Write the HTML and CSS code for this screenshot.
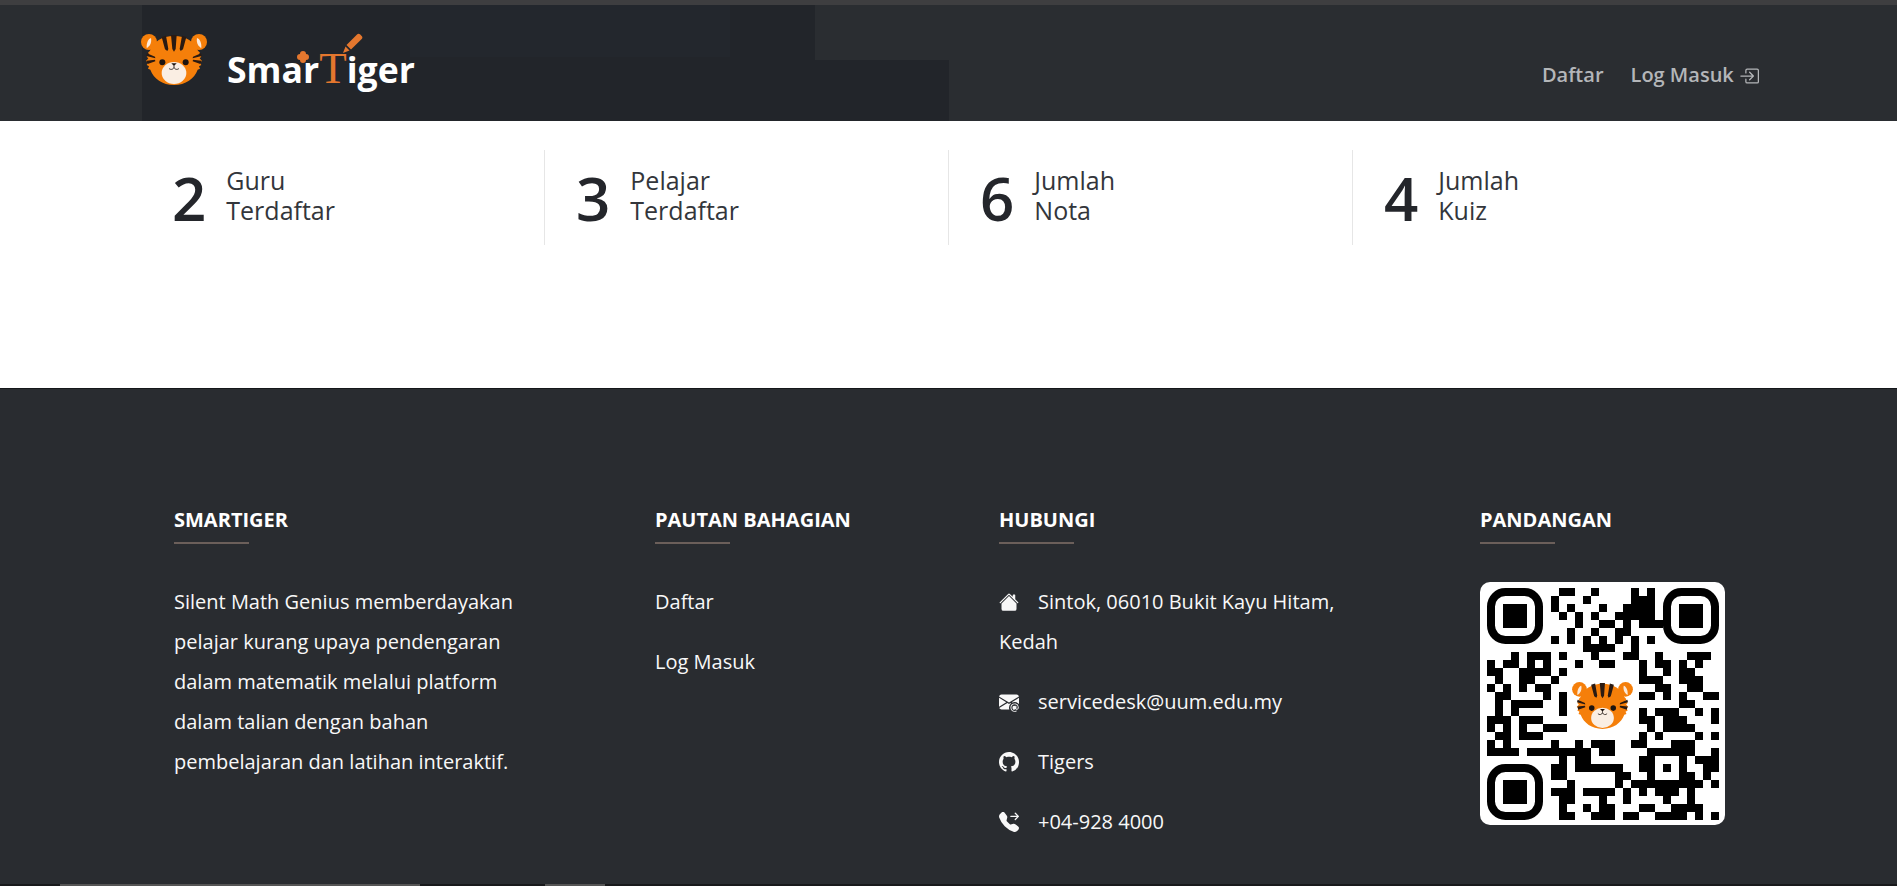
FILE: index.html
```html
<!DOCTYPE html>
<html lang="ms">
<head>
    <meta charset="UTF-8">
    <meta name="viewport" content="width=device-width, initial-scale=1.0">
    <title>SmarTiger</title>
    <link rel="stylesheet" href="styles.css">
</head>
<body>
    <svg class="defs" width="0" height="0">
        <symbol id="tiger" viewBox="0 0 198 153">
            <circle cx="24" cy="24" r="24" fill="#f57f0a"/>
            <circle cx="174" cy="24" r="24" fill="#f57f0a"/>
            <path d="M30 12c-8 2-14 14-13 30 8-4 16-14 13-30z" fill="#fbeadb"/>
            <path d="M168 12c8 2 14 14 13 30-8-4-16-14-13-30z" fill="#fbeadb"/>
            <path d="M99 6c36 0 62 18 72 44l6 6-3 5 7 7-5 5 7 8-7 4 5 8-7 4 3 7-7 3c-10 27-36 46-71 46s-61-19-71-46l-7-3 3-7-7-4 5-8-7-4 7-8-5-5 7-7-3-5 6-6C37 24 63 6 99 6z" fill="#f57f0a"/>
            <path d="M90 3h17l-3 42-5 8-5-8zM62 9l13-4 7 40-3 6-7-5zM136 9l-13-4-7 40 3 6 7-5zM18 58l24 10 1 5-27-7zM17 80l25-3 1 5-23 8zM180 58l-24 10-1 5 27-7zM181 80l-25-3-1 5 23 8z" fill="#2a1a12"/>
            <ellipse cx="99" cy="117" rx="37" ry="33" fill="#faeee3"/>
            <circle cx="64" cy="85" r="9" fill="#1d1410"/>
            <circle cx="134" cy="85" r="9" fill="#1d1410"/>
            <path d="M91 88h16l-8 8z" fill="#1d1410"/>
            <path d="M99 95v5c-2 7-11 8-15 3M99 100c2 7 11 8 15 3" fill="none" stroke="#1d1410" stroke-width="2.5"/>
        </symbol>
    </svg>

    <div class="topline"></div>

    <header class="header">
        <div class="header-bg">
            <div class="bg-upper"><div class="bg-patch"></div></div>
            <div class="bg-lower"></div>
        </div>
        <a class="logo" href="#">
            <svg class="logo-tiger"><use href="#tiger"/></svg>
            <span class="logo-text">Smar<span class="logo-t">T</span>iger</span>
            <svg class="logo-pencil" viewBox="0 0 20 20">
                <path d="M14 1.5a2.2 2.2 0 0 1 3-.2l1.700 1.700a2.200 2.200 0 0 1 0 3L8 16.500 3.500 12z" fill="#e4772e"/>
                <path d="M2.500 13.500l4 4L0 20z" fill="#e4772e"/>
            </svg>
            <svg class="logo-spark" viewBox="0 0 12 12">
                <path d="M6 0a3 3 0 0 1 3 3 3 3 0 0 1 0 6 3 3 0 0 1-6 0 3 3 0 0 1 0-6 3 3 0 0 1 3-3z" fill="#e4772e"/>
            </svg>
        </a>
        <nav class="nav">
            <a href="#">Daftar</a>
            <a href="#">Log Masuk
                <svg class="nav-icon" viewBox="0 0 16 16" fill="currentColor">
                    <path d="M6 3.5a.5.5 0 0 1 .5-.5h8a.5.5 0 0 1 .5.5v9a.5.5 0 0 1-.5.5h-8a.5.5 0 0 1-.5-.5v-2a.5.5 0 0 0-1 0v2A1.5 1.5 0 0 0 6.5 14h8a1.5 1.5 0 0 0 1.5-1.5v-9A1.5 1.5 0 0 0 14.5 2h-8A1.5 1.5 0 0 0 5 3.5v2a.5.5 0 0 0 1 0z"/>
                    <path d="M11.854 8.354a.5.5 0 0 0 0-.708l-3-3a.5.5 0 1 0-.708.708L10.293 7.5H1.5a.5.5 0 0 0 0 1h8.793l-2.147 2.146a.5.5 0 0 0 .708.708z"/>
                </svg>
            </a>
        </nav>
    </header>

    <section class="stats">
        <div class="stat"><span class="stat-num">2</span><span class="stat-label">Guru<br>Terdaftar</span></div>
        <div class="stat"><span class="stat-num">3</span><span class="stat-label">Pelajar<br>Terdaftar</span></div>
        <div class="stat"><span class="stat-num">6</span><span class="stat-label">Jumlah<br>Nota</span></div>
        <div class="stat"><span class="stat-num">4</span><span class="stat-label">Jumlah<br>Kuiz</span></div>
    </section>

    <footer class="footer">
        <div class="footer-col">
            <h4>SmarTiger</h4>
            <p>Silent Math Genius memberdayakan pelajar kurang upaya pendengaran dalam matematik melalui platform dalam talian dengan bahan pembelajaran dan latihan interaktif.</p>
        </div>
        <div class="footer-col">
            <h4>Pautan Bahagian</h4>
            <a class="footer-link" href="#">Daftar</a>
            <a class="footer-link" href="#">Log Masuk</a>
        </div>
        <div class="footer-col">
            <h4>Hubungi</h4>
            <p class="contact">
                <svg class="contact-icon" viewBox="0 0 16 16" fill="currentColor">
                    <path d="M8.707 1.5a1 1 0 0 0-1.414 0L.646 8.146a.5.5 0 0 0 .708.708L8 2.207l6.646 6.647a.5.5 0 0 0 .708-.708L13 5.793V2.5a.5.5 0 0 0-.5-.5h-1a.5.5 0 0 0-.5.5v1.293z"/>
                    <path d="m8 3.293 6 6V13.5a1.5 1.5 0 0 1-1.5 1.5h-9A1.5 1.5 0 0 1 2 13.5V9.293z"/>
                </svg>Sintok, 06010 Bukit Kayu Hitam, Kedah
            </p>
            <p class="contact">
                <svg class="contact-icon" viewBox="0 0 16 16" fill="currentColor">
                    <path d="M2 2A2 2 0 0 0 .05 3.555L8 8.414l7.95-4.859A2 2 0 0 0 14 2zm-2 9.8V4.698l5.803 3.546zm6.761-2.97-6.57 4.026A2 2 0 0 0 2 14h6.256A4.5 4.5 0 0 1 8 12.5a4.49 4.49 0 0 1 1.606-3.446l-.367-.225L8 9.586zM16 9.671V4.697l-5.803 3.546.338.208A4.5 4.5 0 0 1 12.5 8c1.414 0 2.675.652 3.5 1.671"/>
                    <path d="M15.834 12.244c0 1.168-.577 2.025-1.587 2.025-.503 0-1.002-.228-1.12-.648h-.043c-.118.416-.543.643-1.015.643-.77 0-1.259-.542-1.259-1.434v-.529c0-.844.481-1.4 1.26-1.4.585 0 .87.333.953.63h.03v-.568h.905v2.19c0 .272.18.42.411.42.315 0 .639-.415.639-1.39v-.118c0-1.277-.95-2.326-2.484-2.326h-.02c-1.596 0-2.58 1.1-2.58 2.552v.34c0 1.44.96 2.534 2.545 2.534h.05c.753 0 1.2-.151 1.53-.279v.658c-.247.105-.7.237-1.53.237h-.05c-1.997 0-3.3-1.348-3.3-3.15v-.34c0-1.85 1.3-3.17 3.325-3.17h.022c1.794 0 3.165 1.246 3.165 3.08"/>
                </svg>servicedesk@uum.edu.my
            </p>
            <p class="contact">
                <svg class="contact-icon" viewBox="0 0 16 16" fill="currentColor">
                    <path d="M8 0C3.58 0 0 3.58 0 8c0 3.54 2.29 6.53 5.47 7.59.4.07.55-.17.55-.38 0-.19-.01-.82-.01-1.49-2.01.37-2.53-.49-2.69-.94-.09-.23-.48-.94-.82-1.13-.28-.15-.68-.52-.01-.53.63-.01 1.08.58 1.23.82.72 1.21 1.87.87 2.33.66.07-.52.28-.87.51-1.07-1.78-.2-3.64-.89-3.64-3.95 0-.87.31-1.59.82-2.15-.08-.2-.36-1.02.08-2.12 0 0 .67-.21 2.2.82.64-.18 1.32-.27 2-.27s1.36.09 2 .27c1.53-1.04 2.2-.82 2.2-.82.44 1.1.16 1.92.08 2.12.51.56.82 1.27.82 2.15 0 3.07-1.87 3.75-3.65 3.95.29.25.54.73.54 1.48 0 1.07-.01 1.93-.01 2.2 0 .21.15.46.55.38A8.01 8.01 0 0 0 16 8c0-4.42-3.58-8-8-8"/>
                </svg>Tigers
            </p>
            <p class="contact">
                <svg class="contact-icon" viewBox="0 0 16 16" fill="currentColor">
                    <path d="M1.885.511a1.745 1.745 0 0 1 2.61.163L6.29 2.98c.329.423.445.974.315 1.494l-.547 2.19a.68.68 0 0 0 .178.643l2.457 2.457a.68.68 0 0 0 .644.178l2.189-.547a1.75 1.75 0 0 1 1.494.315l2.306 1.794c.829.645.905 1.87.163 2.611l-1.034 1.034c-.74.74-1.846 1.065-2.877.702a18.6 18.6 0 0 1-7.01-4.42 18.6 18.6 0 0 1-4.42-7.009c-.362-1.03-.037-2.137.703-2.877zm10.761.135a.5.5 0 0 1 .708 0l2.5 2.5a.5.5 0 0 1 0 .708l-2.5 2.5a.5.5 0 0 1-.708-.708L14.293 4H9.5a.5.5 0 0 1 0-1h4.793l-1.647-1.646a.5.5 0 0 1 0-.708"/>
                </svg>+04-928 4000
            </p>
        </div>
        <div class="footer-col">
            <h4>Pandangan</h4>
            <div class="qr">
                <svg class="qr-code" viewBox="0 0 29 29">
                    <g fill="none" stroke="#000" stroke-width="1">
                        <rect x=".5" y=".5" width="6" height="6" rx="1.8"/>
                        <rect x="22.5" y=".5" width="6" height="6" rx="1.8"/>
                        <rect x=".5" y="22.5" width="6" height="6" rx="1.8"/>
                    </g>
                    <path d="M2 2h3v3H2zM24 2h3v3h-3zM2 24h3v3H2z"/>
                    <path shape-rendering="crispEdges" d="M9 0h2v1H9zM13 0h1v1h-1zM18 0h1v1h-1zM20 0h1v1h-1z
                    M8 1h1v1H8zM12 1h1v1h-1zM18 1h3v1h-3z
                    M8 2h1v1H8zM10 2h1v1h-1zM14 2h1v1h-1zM17 2h4v1h-4z
                    M9 3h1v1H9zM11 3h1v1h-1zM13 3h1v1h-1zM16 3h5v1h-5z
                    M11 4h1v1h-1zM14 4h2v1h-2zM17 4h1v1h-1zM19 4h3v1h-3z
                    M10 5h1v1h-1zM13 5h1v1h-1zM16 5h2v1h-2z
                    M8 6h1v1H8zM10 6h1v1h-1zM12 6h1v1h-1zM14 6h1v1h-1zM16 6h1v1h-1zM18 6h1v1h-1zM20 6h1v1h-1z
                    M12 7h4v1h-4zM18 7h1v1h-1z
                    M3 8h1v1H3zM5 8h3v1H5zM9 8h1v1H9zM13 8h1v1h-1zM17 8h2v1h-2zM21 8h1v1h-1zM25 8h3v1h-3z
                    M0 9h1v1H0zM2 9h2v1H2zM5 9h1v1H5zM7 9h1v1H7zM11 9h1v1h-1zM14 9h2v1h-2zM19 9h1v1h-1zM21 9h2v1h-2zM24 9h1v1h-1zM26 9h1v1h-1z
                    M0 10h2v1H0zM4 10h4v1H4zM9 10h1v1H9zM19 10h1v1h-1zM22 10h1v1h-1zM24 10h2v1h-2z
                    M1 11h1v1H1zM4 11h2v1H4zM8 11h1v1H8zM19 11h3v1h-3zM24 11h3v1h-3z
                    M0 12h1v1H0zM2 12h1v1H2zM4 12h1v1H4zM6 12h2v1H6zM21 12h2v1h-2zM25 12h2v1h-2z
                    M1 13h2v1H1zM7 13h1v1H7zM9 13h1v1H9zM19 13h2v1h-2zM22 13h1v1h-1zM24 13h1v1h-1zM27 13h2v1h-2z
                    M1 14h1v1H1zM3 14h4v1H3zM9 14h1v1H9zM24 14h2v1h-2z
                    M1 15h1v1H1zM3 15h1v1H3zM9 15h1v1H9zM19 15h1v1h-1zM21 15h3v1h-3zM26 15h1v1h-1zM28 15h1v1h-1z
                    M0 16h3v1H0zM4 16h3v1H4zM19 16h2v1h-2zM22 16h3v1h-3zM28 16h1v1h-1z
                    M0 17h1v1H0zM2 17h1v1H2zM4 17h1v1H4zM7 17h3v1H7zM20 17h1v1h-1zM22 17h4v1h-4z
                    M1 18h2v1H1zM4 18h3v1H4zM19 18h1v1h-1zM21 18h1v1h-1zM26 18h1v1h-1zM28 18h1v1h-1z
                    M0 19h1v1H0zM2 19h1v1H2zM8 19h1v1H8zM11 19h1v1h-1zM13 19h3v1h-3zM18 19h2v1h-2zM23 19h3v1h-3z
                    M0 20h4v1H0zM5 20h8v1H5zM14 20h2v1h-2zM20 20h6v1h-6zM28 20h1v1h-1z
                    M9 21h1v1H9zM11 21h2v1h-2zM19 21h2v1h-2zM24 21h1v1h-1zM26 21h3v1h-3z
                    M8 22h2v1H8zM11 22h6v1h-6zM19 22h2v1h-2zM22 22h1v1h-1zM24 22h1v1h-1zM27 22h2v1h-2z
                    M8 23h2v1H8zM16 23h2v1h-2zM20 23h1v1h-1zM24 23h2v1h-2zM27 23h1v1h-1z
                    M10 24h1v1h-1zM16 24h1v1h-1zM18 24h9v1h-9zM28 24h1v1h-1z
                    M8 25h3v1H8zM12 25h4v1h-4zM17 25h1v1h-1zM19 25h1v1h-1zM21 25h3v1h-3zM25 25h1v1h-1z
                    M9 26h2v1H9zM14 26h1v1h-1zM17 26h1v1h-1zM22 26h1v1h-1zM25 26h1v1h-1z
                    M9 27h1v1H9zM12 27h1v1h-1zM14 27h2v1h-2zM19 27h2v1h-2zM23 27h4v1h-4z
                    M9 28h2v1H9zM13 28h3v1h-3zM17 28h2v1h-2zM21 28h4v1h-4zM26 28h1v1h-1zM28 28h1v1h-1z"/>
                </svg>
                <svg class="qr-tiger"><use href="#tiger"/></svg>
            </div>
        </div>
    </footer>

    <div class="bottomline">
        <span class="seg-long"></span>
        <span class="seg-short"></span>
    </div>
</body>
</html>
```

FILE: styles.css
```css
* {
    box-sizing: border-box;
}

html, body {
    margin: 0;
    height: 886px;
    overflow: hidden;
}

body {
    font-family: "Open Sans", sans-serif;
    background-color: #fff;
    display: flex;
    flex-direction: column;
}

a {
    color: inherit;
    text-decoration: none;
}

.defs {
    position: absolute;
}

.topline {
    height: 5px;
    background-color: #3e3e40;
}

/* header */
.header {
    position: relative;
    height: 116px;
    background-color: #2a2d31;
    display: flex;
    justify-content: space-between;
    padding: 0 138px 0 141px;
}

.header-bg {
    position: absolute;
    left: 142px;
    top: 0;
    bottom: 0;
    width: 807px;
    display: flex;
    flex-direction: column;
}

.bg-upper {
    height: 55px;
    width: 673px;
    background-color: #22252a;
    padding-left: 268px;
}

.bg-patch {
    width: 320px;
    height: 52px;
    background-color: #23272d;
}

.bg-lower {
    flex: 1;
    background-color: #22252a;
}

.logo {
    position: relative;
    display: flex;
    align-items: center;
    height: 100%;
}

.logo-tiger {
    width: 66px;
    height: 51px;
    margin-top: -7px;
}

.logo-text {
    margin-left: 20px;
    margin-top: 12px;
    font-size: 35.6px;
    line-height: 50px;
    font-weight: 700;
    color: #fff;
}

.logo-t {
    font-family: "Liberation Serif", serif;
    font-weight: 400;
    font-size: 45px;
    line-height: 40px;
    color: #e4772e;
}

.logo-pencil {
    position: absolute;
    left: 202px;
    top: 28px;
    width: 20px;
    height: 20px;
}

.logo-spark {
    position: absolute;
    left: 156px;
    top: 46px;
    width: 12px;
    height: 12px;
}

.nav {
    position: relative;
    display: flex;
    align-items: center;
    gap: 27px;
    padding-top: 22px;
    font-size: 20px;
    font-weight: 600;
    color: #b4b6b9;
}

.nav-icon {
    width: 20px;
    height: 20px;
    vertical-align: -4px;
}

/* stats */
.stats {
    height: 267px;
    padding: 29px 141px 0;
    display: grid;
    grid-template-columns: repeat(4, 404px);
    align-items: start;
}

.stat {
    height: 95px;
    padding: 0 0 0 31px;
    border-right: 1px solid #e6e6e6;
    display: flex;
    align-items: center;
    gap: 20px;
    color: #24262b;
}

.stat:last-child {
    border-right: none;
}

.stat-num {
    font-size: 60px;
    font-weight: 600;
    line-height: 1;
}

.stat-label {
    font-size: 25px;
    line-height: 30px;
    font-weight: 400;
    color: #33363b;
    margin-bottom: 6px;
}

/* footer */
.footer {
    flex: 1;
    background-color: #292c30;
    border-top: 1px solid #15171a;
    padding: 116px 0 0 174px;
    display: grid;
    grid-template-columns: 481px 344px 481px 250px;
    color: #f8f8f8;
    font-size: 20px;
    line-height: 40px;
}

.footer-col h4 {
    margin: 0 0 38px;
    padding-bottom: 9px;
    position: relative;
    font-size: 20px;
    line-height: 30px;
    font-weight: 700;
    text-transform: uppercase;
    color: #fff;
}

.footer-col h4::after {
    content: "";
    position: absolute;
    left: 0;
    bottom: 0;
    width: 75px;
    height: 2px;
    background-color: #6b5f5a;
}

.footer-col p {
    margin: 0;
    width: 360px;
}

.footer-link {
    display: block;
    margin-bottom: 20px;
}

.footer-col .contact {
    margin-bottom: 20px;
    width: 370px;
}

.contact-icon {
    width: 20px;
    height: 20px;
    margin-right: 19px;
    vertical-align: -3px;
}

.qr {
    position: relative;
    width: 245px;
    height: 243px;
    background-color: #fff;
    border-radius: 10px;
    padding: 6px 6.5px;
}

.qr-code {
    display: block;
    width: 232px;
    height: 232px;
}

.qr-tiger {
    position: absolute;
    left: 92px;
    top: 100px;
    width: 61px;
    height: 47px;
}

.bottomline {
    height: 2px;
    background-color: #18191b;
    position: relative;
    flex: none;
}

.seg-long,
.seg-short {
    position: absolute;
    top: 0;
    height: 2px;
    background-color: #555;
}

.seg-long {
    left: 60px;
    width: 360px;
}

.seg-short {
    left: 545px;
    width: 60px;
}
```
